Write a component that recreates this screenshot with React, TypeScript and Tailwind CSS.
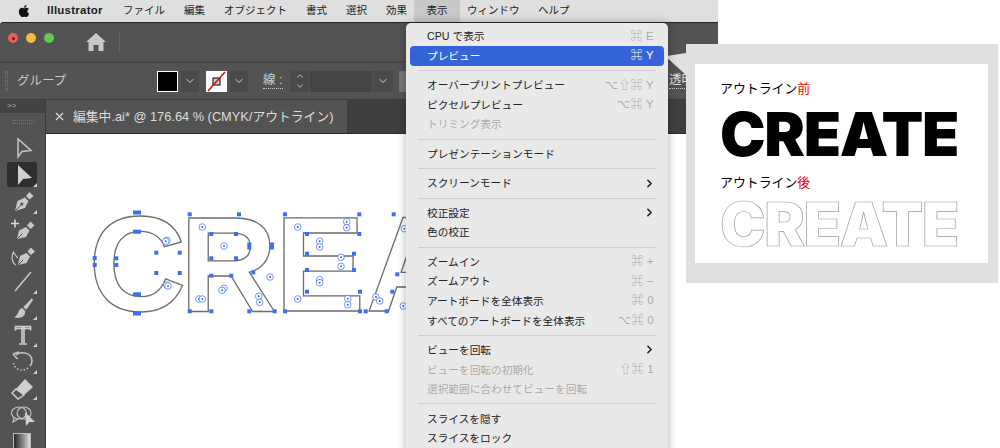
import React from 'react';
import { ChevronDown, ChevronRight, ChevronUp, X } from 'lucide-react';
import { FaApple } from 'react-icons/fa';

type MenuRow =
  | { sep: true }
  | { label: string; keys?: string; active?: boolean; disabled?: boolean; arrow?: boolean; sep?: false };

const menuBar = [
  { name: 'ファイル', w: 'w-[42px]' },
  { name: '編集', w: 'w-[21px]' },
  { name: 'オブジェクト', w: 'w-[63px]' },
  { name: '書式', w: 'w-[21px]' },
  { name: '選択', w: 'w-[21px]' },
  { name: '効果', w: 'w-[21px]' },
];

const menuRows: MenuRow[] = [
  { label: 'CPU で表示', keys: '⌘ E' },
  { label: 'プレビュー', keys: '⌘ Y', active: true },
  { sep: true },
  { label: 'オーバープリントプレビュー', keys: '⌥⇧⌘ Y' },
  { label: 'ピクセルプレビュー', keys: '⌥⌘ Y' },
  { label: 'トリミング表示', disabled: true },
  { sep: true },
  { label: 'プレゼンテーションモード' },
  { sep: true },
  { label: 'スクリーンモード', arrow: true },
  { sep: true },
  { label: '校正設定', arrow: true },
  { label: '色の校正' },
  { sep: true },
  { label: 'ズームイン', keys: '⌘ +' },
  { label: 'ズームアウト', keys: '⌘ −' },
  { label: 'アートボードを全体表示', keys: '⌘ 0' },
  { label: 'すべてのアートボードを全体表示', keys: '⌥⌘ 0' },
  { sep: true },
  { label: 'ビューを回転', arrow: true },
  { label: 'ビューを回転の初期化', keys: '⇧⌘ 1', disabled: true },
  { label: '選択範囲に合わせてビューを回転', disabled: true },
  { sep: true },
  { label: 'スライスを隠す' },
  { label: 'スライスをロック' },
];

// anchor points of the selected outlines: x, y, w, h (centre based)
const anchors: number[][] = [
  [137, 211.5, 8, 4], [94.7, 257, 4, 4], [94.7, 264, 4, 4], [137, 312.5, 8, 4],
  [137, 230.7, 8, 4], [116.3, 257.3, 4, 4], [116.3, 264, 4, 4], [137, 293.3, 8, 4],
  [156.3, 251.7, 4, 4], [179.7, 251.7, 4, 4], [156.3, 272, 4, 4], [179.7, 272, 4, 4],
  [189.7, 213.3, 4, 4], [239, 213.3, 4, 4], [272, 245, 4, 7], [253.3, 271.3, 4, 4],
  [274.7, 310.3, 4, 4], [249.3, 310.3, 4, 4], [231.3, 274.7, 4, 4], [211.3, 274.7, 4, 4],
  [211.3, 310.3, 4, 4], [189.7, 310.3, 4, 4], [211.3, 233, 4, 4], [236, 233, 4, 4],
  [249.3, 245, 4, 7], [236, 257.3, 4, 4], [211.3, 257.3, 4, 4],
  [285, 213.3, 4, 4], [359.3, 213.3, 4, 4], [359.3, 233, 4, 4], [307, 233, 4, 4],
  [307, 252.7, 4, 4], [354, 252.7, 4, 4], [354, 269, 4, 4], [307, 269, 4, 4],
  [307, 290.7, 4, 4], [360, 290.7, 4, 4], [360, 310.3, 4, 4], [285, 310.3, 4, 4],
  [393.7, 213.3, 4, 4], [365.7, 310.3, 4, 4], [386.7, 310.3, 4, 4], [392.3, 290.7, 4, 4],
  [397.3, 273.3, 4, 4],
];

// centre marks of the letter parts, in the same page coordinates
const centres: number[][] = [
  [202.3, 226], [167, 239.3], [165.7, 240.3], [166.7, 284], [168, 285], [224, 245],
  [297.7, 226], [346.7, 220.7], [346.7, 226.7], [319.7, 240.3], [319.7, 246], [341, 256.3],
  [341, 265.3], [319.7, 278.7], [319.7, 281.7], [297.7, 298], [347.7, 297.7], [347.7, 303.7],
  [404.3, 227.7], [403.3, 305], [270, 276], [258.7, 295.3], [259.7, 301.3], [224, 287.3],
  [222, 289.3], [199, 298], [202.3, 298], [376, 296], [379.7, 300],
];

const letters = [
  { ch: 'C', x: 88.7 },
  { ch: 'R', x: 179.7 },
  { ch: 'E', x: 275 },
  { ch: 'A', x: 365.7 },
];

const ic = 'w-[24px] h-[24px]';

const toolIcons: { key: string; corner?: boolean; active?: boolean; icon: React.ReactNode }[] = [
  {
    key: 'select',
    icon: (
      <svg viewBox="0 0 24 24" className={ic} fill="none" stroke="#c4c4c4" strokeWidth="1.5">
        <path d="M7 3 L7 21 L11 15.5 L20 14.5 Z" />
      </svg>
    ),
  },
  {
    key: 'direct',
    active: true,
    corner: true,
    icon: (
      <svg viewBox="0 0 24 24" className={ic} fill="#d0d0d0">
        <path d="M7 2 L7 22 L12 16 L21 15 Z" />
      </svg>
    ),
  },
  {
    key: 'pen',
    corner: true,
    icon: (
      <svg viewBox="0 0 24 24" className={ic} fill="#c8c8c8">
        <path d="M4 22 L6.5 12 L14 8.5 L17.5 12 L14 19 Z" />
        <path d="M15 7 L18.5 3 L22.5 7 L18.5 10.5 Z" />
        <path d="M4.5 21.5 L10 16" stroke="#535353" strokeWidth="1" />
        <circle cx="10.8" cy="15" r="1.5" fill="#535353" />
      </svg>
    ),
  },
  {
    key: 'addpen',
    icon: (
      <svg viewBox="0 0 24 24" className={ic} fill="#c8c8c8">
        <path d="M6 23 L8 14.5 L15 11 L18.5 14.5 L15 21 Z" />
        <path d="M16 9.5 L19.5 5.5 L23.5 9.5 L19.5 13 Z" />
        <path d="M6.5 22.5 L11.5 17.5" stroke="#535353" strokeWidth="1" />
        <path d="M0 7.5 H8 M4 3.5 V11.5" stroke="#d8d8d8" strokeWidth="1.6" />
      </svg>
    ),
  },
  {
    key: 'curvature',
    icon: (
      <svg viewBox="0 0 24 24" className={ic} fill="#c8c8c8">
        <path d="M7 22 L9 13 L15.5 10 L19 13.5 L15.5 20 Z" />
        <path d="M16.5 8.5 L20 4.5 L24 8.5 L20 12 Z" />
        <path d="M7.5 21.5 L12 17" stroke="#535353" strokeWidth="1" />
        <path d="M5 22 C1 20 0 14 2.5 9 C4 11 5 14 7 15" fill="none" stroke="#c8c8c8" strokeWidth="1.2" />
      </svg>
    ),
  },
  {
    key: 'line',
    corner: true,
    icon: (
      <svg viewBox="0 0 24 24" className={ic} fill="none" stroke="#c8c8c8" strokeWidth="1.5">
        <path d="M4 22 L20 3" />
      </svg>
    ),
  },
  {
    key: 'brush',
    corner: true,
    icon: (
      <svg viewBox="0 0 24 24" className={ic} fill="#c8c8c8">
        <path d="M21 2 L12.5 11 L15 14 L22 4 Z" />
        <path d="M11.5 12 C7 12.5 8 19 3 21.5 C9 23 15 20.5 14 15 Z" />
      </svg>
    ),
  },
  {
    key: 'type',
    corner: true,
    icon: (
      <svg viewBox="0 0 24 24" className={ic} fill="none" stroke="#cfcfcf" strokeWidth="1.6">
        <path d="M4.5 7.5 V3.5 H19.5 V7.5 M4.5 5.5 H19.5 M11 4 V20 M13 4 V20 M8 21 H16" />
      </svg>
    ),
  },
  {
    key: 'rotate',
    corner: true,
    icon: (
      <svg viewBox="0 0 24 24" className={ic} fill="none" stroke="#c8c8c8" strokeWidth="1.5">
        <path d="M5 6 C9 2 21 3 21 12 C21 14 20 16 19 17" />
        <path d="M2 5 L8 3 M2 5 L6.5 10" />
        <path d="M17 19 C13 22 7 22 3.5 17 C3 16 2.5 15 2.5 13" strokeDasharray="1.4 2" />
      </svg>
    ),
  },
  {
    key: 'eraser',
    corner: true,
    icon: (
      <svg viewBox="0 0 24 24" className={ic} fill="#d0d0d0">
        <path d="M5 13 L14 3 L22 11 L13 19 Z" />
        <path d="M5 13 L1 17 L7 23 L13 19 Z" fill="none" stroke="#d0d0d0" strokeWidth="1.5" />
      </svg>
    ),
  },
  {
    key: 'comment',
    icon: (
      <svg viewBox="0 0 24 24" className={ic} fill="none" stroke="#c4c4c4" strokeWidth="1.1">
        <ellipse cx="8" cy="10" rx="7.5" ry="6" />
        <ellipse cx="13" cy="10" rx="7" ry="6" />
        <path d="M3 15 L2 19 L7 16" />
        <path d="M14 9 L15 23 L18.5 19 L24 19 Z" fill="#d0d0d0" stroke="none" />
      </svg>
    ),
  },
];

const App: React.FC = () => {
  return (
    <div className="relative w-[1000px] h-[448px] overflow-hidden bg-white [font-family:'Liberation_Sans','Noto_Sans_CJK_JP','DejaVu_Sans',sans-serif]">
      <div className="flex flex-col w-[718px] h-[448px]">
        {/* Mac menu bar */}
        <div className="flex items-center h-[22px] shrink-0 bg-[#dfdfdf] text-[10.5px] text-[#1c1c1c] pl-[17px]">
          <FaApple size={14} className="text-[#111] mb-px" />
          <span className="ml-[16px] w-[57px] font-bold text-[11.5px] tracking-[0.25px]">Illustrator</span>
          <div className="flex items-center ml-[19px] gap-[19px]">
            {menuBar.map((m) => (
              <span key={m.name} className={`${m.w} whitespace-nowrap`}>{m.name}</span>
            ))}
          </div>
          <span className="ml-[7px] w-[46px] h-[22px] flex items-center justify-center bg-[#c8c8c8] rounded-b-[3px]">表示</span>
          <span className="ml-[7px] w-[52px] whitespace-nowrap">ウィンドウ</span>
          <span className="ml-[19px] whitespace-nowrap">ヘルプ</span>
        </div>

        {/* App title row */}
        <div className="flex items-center h-[39px] shrink-0 bg-[#535353] border-t border-[#20242e] pl-[8px] rounded-tl-[3px]">
          <span className="mb-[8px] w-[10px] h-[10px] rounded-full bg-[#ec5f57] flex items-center justify-center">
            <span className="w-[3px] h-[3px] rounded-full bg-[#7a1712]" />
          </span>
          <span className="mb-[8px] ml-[8px] w-[10px] h-[10px] rounded-full bg-[#f4bd3a]" />
          <span className="mb-[8px] ml-[8px] w-[10px] h-[10px] rounded-full bg-[#66c84c]" />
          <svg viewBox="0 0 20 18" className="ml-[32px] w-[20px] h-[18px]" fill="#c9c9c9">
            <path d="M10 0 L20 9 L17.5 9 L17.5 18 L12.5 18 L12.5 12 L7.5 12 L7.5 18 L2.5 18 L2.5 9 L0 9 Z" />
          </svg>
          <div className="ml-[13px] w-px h-[22px] bg-[#636363]" />
        </div>

        {/* Control bar */}
        <div className="flex items-center h-[39px] shrink-0 bg-[#535353] border-t-2 border-[#474747] border-b border-b-[#3a3a3a]">
          <div className="ml-[5px] w-[3px] h-[20px] border-x border-dotted border-[#777]" />
          <span className="ml-[9px] w-[50px] text-[12.5px] text-[#c8c8c8] whitespace-nowrap">グループ</span>
          <div className="ml-[90px] w-[21px] h-[21px] bg-black border border-white" />
          <div className="ml-[3px] w-[18px] h-[21px] flex items-center justify-center bg-[#4a4a4a] rounded-r-[2px]">
            <ChevronDown size={12} strokeWidth={2} className="text-[#d5d5d5]" />
          </div>
          <svg viewBox="0 0 21 21" className="ml-[7px] w-[21px] h-[21px]">
            <rect width="21" height="21" fill="#fff" />
            <rect x="7" y="7" width="7" height="7" fill="#ccc" stroke="#222" strokeWidth="1.2" />
            <path d="M2 20 L19 1" stroke="#d8101c" strokeWidth="1.6" />
          </svg>
          <div className="ml-[3px] w-[18px] h-[21px] flex items-center justify-center bg-[#4a4a4a] rounded-r-[2px]">
            <ChevronDown size={12} strokeWidth={2} className="text-[#d5d5d5]" />
          </div>
          <span className="ml-[15px] w-[20px] text-[12.5px] leading-[15px] text-[#d0d0d0] border-b border-dotted border-[#d0d0d0] whitespace-nowrap">線 :</span>
          <div className="ml-[7px] w-[19px] h-[21px] flex flex-col items-center justify-center bg-[#4a4a4a] rounded-l-[2px]">
            <ChevronUp size={10} strokeWidth={2} className="text-[#d5d5d5]" />
            <ChevronDown size={10} strokeWidth={2} className="text-[#d5d5d5]" />
          </div>
          <div className="ml-px w-[62px] h-[21px] bg-[#444444]" />
          <div className="ml-px w-[20px] h-[21px] flex items-center justify-center bg-[#4a4a4a] rounded-r-[2px]">
            <ChevronDown size={12} strokeWidth={2} className="text-[#d5d5d5]" />
          </div>
          <div className="ml-[6px] w-[10px] h-[21px] bg-[#777777]" />
          <span className="ml-[260px] text-[12.5px] leading-[15px] text-[#e0e0e0] border-b border-dotted border-[#d0d0d0] whitespace-nowrap">透明度</span>
        </div>

        {/* Tab row + work area */}
        <div className="flex flex-1 min-h-0">
          <div className="flex flex-col w-[46px] shrink-0 bg-[#535353] border-r border-[#3c3c3c] overflow-hidden">
            <div className="h-[13px] shrink-0 bg-[#434343] text-[8px] leading-[12px] text-[#b5b5b5] pl-[7px]">&gt;&gt;</div>
            <div className="h-[17px] shrink-0 flex items-center justify-center">
              <div className="w-[22px] h-[4px] border-y border-dotted border-[#777]" />
            </div>
            <div className="mt-[4.6px] flex flex-col shrink-0">
              {toolIcons.map((t) => (
                <div key={t.key} className="relative h-[26.7px] shrink-0 flex items-center justify-center">
                  {t.active && <div className="absolute left-[7px] top-px w-[30px] h-[25px] rounded-[2px] bg-[#2e2e2e]" />}
                  <div className="relative">{t.icon}</div>
                  {t.corner && (
                    <div className="absolute right-[8px] bottom-[1px] w-0 h-0 border-l-[4px] border-l-transparent border-b-[4px] border-b-[#d0d0d0]" />
                  )}
                </div>
              ))}
              <div className="ml-[13px] mt-[5px] w-[18px] h-[20px] shrink-0 bg-gradient-to-r from-[#2a2a2a] to-[#e0e0e0] border border-[#bbb]" />
            </div>
          </div>

          <div className="flex flex-col flex-1 min-w-0">
            <div className="flex h-[34px] shrink-0 bg-[#3f3f3f] border-b border-[#2a2a2a]">
              <div className="flex items-center w-[301px] bg-[#535353] pl-[7px] text-[12.8px] text-[#dcdcdc] whitespace-nowrap">
                <X size={13} strokeWidth={2} className="text-[#e0e0e0]" />
                <span className="ml-[7px]">編集中.ai* @ 176.64 % (CMYK/アウトライン)</span>
              </div>
            </div>

            {/* Artboard */}
            <div className="flex-1 min-h-0 bg-white pt-[72px] pl-[44px] overflow-hidden">
              <svg viewBox="90 205 330 115" className="block w-[330px] h-[115px] overflow-visible">
                {letters.map((l) => (
                  <text
                    key={l.ch}
                    x={l.x}
                    y={310.3}
                    fontSize={135}
                    fontWeight={700}
                    fill="none"
                    stroke="#6e6e6e"
                    strokeWidth={1.3}
                    className="[font-family:'Liberation_Sans',sans-serif]"
                  >
                    {l.ch}
                  </text>
                ))}
                {centres.map(([x, y], i) => (
                  <g key={i}>
                    <circle cx={x} cy={y} r={3.3} fill="#fff" stroke="#4a7dff" strokeWidth={0.8} />
                    <circle cx={x} cy={y} r={1} fill="#2f66f5" />
                  </g>
                ))}
                {anchors.map(([x, y, w, h], i) => (
                  <rect key={i} x={x - w / 2} y={y - h / 2} width={w} height={h} fill="#3672f8" />
                ))}
              </svg>
            </div>
          </div>
        </div>
      </div>

      {/* Callout with before / after */}
      <div className="absolute left-[668px] top-[53px] w-[18px] h-[22px] bg-[#e0e0e0] [clip-path:polygon(0_12%,100%_0,100%_100%,0_26%)]" />
      <div className="absolute left-[686px] top-[44px] w-[312px] h-[239px] bg-[#e0e0e0] pt-[20px] pl-[9px]">
        <div className="w-[293px] h-[199px] bg-white pl-[25px] pt-[15px]">
          <div className="h-[20px] text-[12.9px] leading-[20px] text-black">アウトライン<span className="text-[#f00000]">前</span></div>
          <div className="h-[67px] pt-[5px] text-[61px] leading-[60px] font-black tracking-[-1.3px] text-black [font-family:'Inter',sans-serif]">CREATE</div>
          <div className="h-[20px] mt-[7px] text-[12.9px] leading-[20px] text-black">アウトライン<span className="text-[#f00000]">後</span></div>
          <div className="h-[60px] pt-[1px] text-[61px] leading-[60px] font-black tracking-[-1.3px] text-transparent [-webkit-text-stroke:0.7px_#9c9c9c] [font-family:'Inter',sans-serif]">CREATE</div>
        </div>
      </div>

      {/* Open view menu */}
      <div className="absolute left-[406px] top-[23px] w-[262px] h-[440px] rounded-[5px] bg-[#e9e9e9] px-[4px] pt-[3.5px] shadow-[0_0_10px_rgba(0,0,0,0.3)] text-[10.68px] text-[#222]">
        {menuRows.map((row, i) =>
          row.sep ? (
            <div key={i} className="h-[9.83px] flex items-center px-[8px]">
              <div className="w-full h-[1px] bg-[#cfcfcf]" />
            </div>
          ) : (
            <div
              key={i}
              className={`flex items-center justify-between h-[19.6px] pl-[17px] pr-[10px] rounded-[4px] whitespace-nowrap ${
                row.active ? 'bg-[#3564d8] text-white' : row.disabled ? 'text-[#ababab]' : ''
              }`}
            >
              <span>{row.label}</span>
              {row.keys && (
                <span className={`text-[11.5px] tracking-[0.4px] ${row.active ? 'text-white' : 'text-[#ababab]'}`}>{row.keys}</span>
              )}
              {row.arrow && <ChevronRight size={13} strokeWidth={3} className="text-[#222] -mr-[2px]" />}
            </div>
          )
        )}
      </div>
    </div>
  );
};

export default App;
